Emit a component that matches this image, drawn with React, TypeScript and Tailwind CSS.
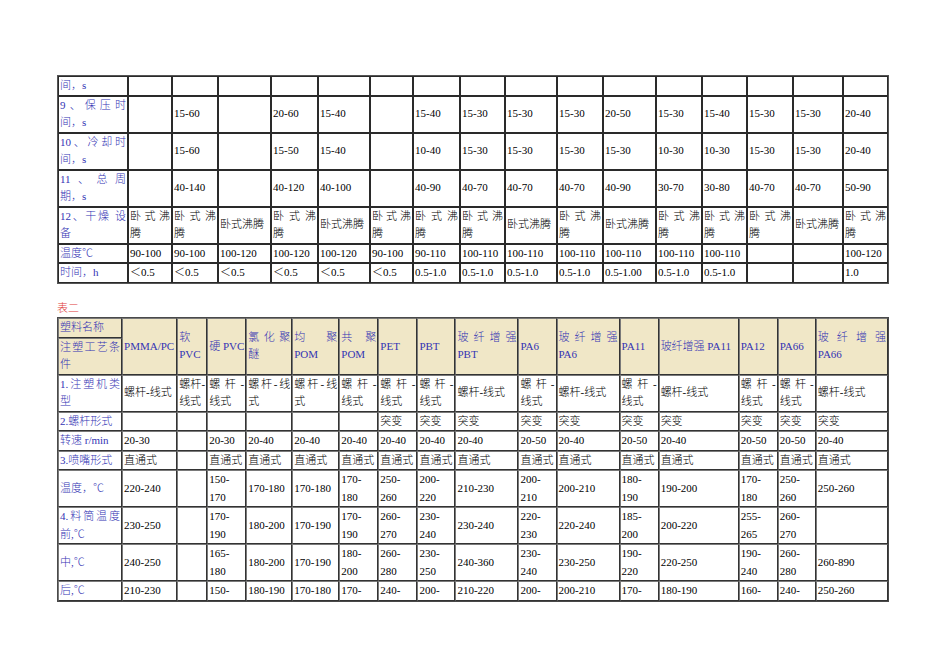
import React from "react";

const FONT = "font-['Liberation_Serif','Noto_Sans_CJK_SC',serif]";

const W1 = [
  "w-[70px]", "w-[44px]", "w-[46px]", "w-[53px]", "w-[47px]", "w-[52px]", "w-[43px]", "w-[47px]", "w-[45px]",
  "w-[52px]", "w-[46px]", "w-[53px]", "w-[46px]", "w-[45px]", "w-[46px]", "w-[50px]", "w-[45px]",
];

const W2 = [
  "w-[64px]", "w-[55px]", "w-[30px]", "w-[39px]", "w-[46px]", "w-[47px]", "w-[39px]", "w-[39px]", "w-[38px]",
  "w-[63px]", "w-[38px]", "w-[63px]", "w-[39px]", "w-[80px]", "w-[39px]", "w-[38px]", "w-[72px]",
];

type Row = { label: string; cells: string[] };

const W = "卧式沸|腾";
const S = "卧式沸腾";

const table1: Row[] = [
  { label: "间，s", cells: Array(16).fill("") },
  { label: "9、保压时|间，s", cells: ["", "15-60", "", "20-60", "15-40", "", "15-40", "15-30", "15-30", "15-30", "20-50", "15-30", "15-40", "15-30", "15-30", "20-40"] },
  { label: "10、冷却时|间，s", cells: ["", "15-60", "", "15-50", "15-40", "", "10-40", "15-30", "15-30", "15-30", "15-30", "10-30", "10-30", "15-30", "15-30", "20-40"] },
  { label: "11、总周|期，s", cells: ["", "40-140", "", "40-120", "40-100", "", "40-90", "40-70", "40-70", "40-70", "40-90", "30-70", "30-80", "40-70", "40-70", "50-90"] },
  { label: "12、干燥 设|备", cells: [W, W, S, W, S, W, W, W, S, W, S, W, W, W, S, W] },
  { label: "温度℃", cells: ["90-100", "90-100", "100-120", "100-120", "100-120", "90-100", "90-110", "100-110", "100-110", "100-110", "100-110", "100-110", "100-110", "", "", "100-120"] },
  { label: "时间，h", cells: ["＜0.5", "＜0.5", "＜0.5", "＜0.5", "＜0.5", "＜0.5", "0.5-1.0", "0.5-1.0", "0.5-1.0", "0.5-1.0", "0.5-1.00", "0.5-1.0", "0.5-1.0", "", "", "1.0"] },
];

const headers2 = [
  "PMMA/PC", "软|PVC", "硬 PVC", "氯化聚|醚", "均聚|POM", "共聚|POM", "PET", "PBT", "玻纤增强|PBT",
  "PA6", "玻纤增强|PA6", "PA11", "玻纤增强 PA11", "PA12", "PA66", "玻纤增强|PA66",
];

const LX = "螺杆-线式";
const L2 = "螺杆-|线式";
const ZT = "直通式";
const TB = "突变";

const table2: Row[] = [
  { label: "1.注塑机类|型", cells: [LX, "螺杆-|线式", L2, "螺杆-线|式", "螺杆-线|式", L2, L2, L2, LX, L2, LX, L2, LX, L2, L2, LX] },
  { label: "2.螺杆形式", cells: ["", "", "", "", "", "", TB, TB, TB, TB, TB, TB, TB, TB, TB, TB] },
  { label: "转速 r/min", cells: ["20-30", "", "20-30", "20-40", "20-40", "20-40", "20-40", "20-40", "20-40", "20-50", "20-40", "20-50", "20-40", "20-50", "20-50", "20-40"] },
  { label: "3.喷嘴形式", cells: [ZT, "", ZT, ZT, ZT, ZT, ZT, ZT, ZT, ZT, ZT, ZT, ZT, ZT, ZT, ZT] },
  { label: "温度，℃", cells: ["220-240", "", "150-|170", "170-180", "170-180", "170-|180", "250-|260", "200-|220", "210-230", "200-|210", "200-210", "180-|190", "190-200", "170-|180", "250-|260", "250-260"] },
  { label: "4.料筒温度|前,℃", cells: ["230-250", "", "170-|190", "180-200", "170-190", "170-|190", "260-|270", "230-|240", "230-240", "220-|230", "220-240", "185-|200", "200-220", "255-|265", "260-|270", ""] },
  { label: "中,℃", cells: ["240-250", "", "165-|180", "180-200", "170-190", "180-|200", "260-|280", "230-|250", "240-360", "230-|240", "230-250", "190-|220", "220-250", "190-|240", "260-|280", "260-890"] },
  { label: "后,℃", cells: ["210-230", "", "150-", "180-190", "170-180", "170-", "240-", "200-", "210-220", "200-", "200-210", "170-", "180-190", "160-", "240-", "250-260"] },
];

function Content({ v }: { v: string }) {
  if (!v) return null;
  const parts = v.split("|");
  if (parts.length === 1) return <span className="whitespace-nowrap">{v}</span>;
  return (
    <>
      <span className="block text-justify [text-align-last:justify]">{parts[0]}</span>
      <span className="block whitespace-nowrap">{parts[1]}</span>
    </>
  );
}

const C1 = "border border-[#2a2a2a] px-[1px] py-0 align-middle text-left leading-[17.5px]";
const C2 =
  "border border-t-[#7a7a7a] border-l-[#7a7a7a] border-r-[#333333] border-b-[#333333] px-[1px] py-0 align-middle text-left leading-[17.5px]";
const BLUE = "text-[#3434b4]";
const HEAD = "bg-[#f0e7c7]";

export default function App() {
  return (
    <div className={`${FONT} min-h-[672px] w-[950px] bg-white pl-[57px] pt-[75px] text-[11px] font-light text-black`}>
      <table className="w-[832px] table-fixed border-separate border-spacing-0 border border-[#555]">
        <colgroup>
          {W1.map((c, i) => (
            <col key={i} className={c} />
          ))}
        </colgroup>
        <tbody>
          {table1.map((r, ri) => (
            <tr key={ri}>
              <td className={`${C1} ${BLUE}`}>
                <Content v={r.label} />
              </td>
              {r.cells.map((c, ci) => (
                <td key={ci} className={C1}>
                  <Content v={c} />
                </td>
              ))}
            </tr>
          ))}
        </tbody>
      </table>

      <p className="mt-[16px] leading-[17.5px] text-[#e03c3c]">表二</p>

      <table className="w-[832px] table-fixed border-separate border-spacing-0 border border-[#4a4a4a]">
        <colgroup>
          {W2.map((c, i) => (
            <col key={i} className={c} />
          ))}
        </colgroup>
        <tbody>
          <tr>
            <td className={`${C2} ${BLUE} ${HEAD}`}>
              <span className="whitespace-nowrap">塑料名称</span>
            </td>
            {headers2.map((h, i) => (
              <td key={i} rowSpan={2} className={`${C2} ${BLUE} ${HEAD}`}>
                <Content v={h} />
              </td>
            ))}
          </tr>
          <tr>
            <td className={`${C2} ${BLUE} ${HEAD}`}>
              <Content v="注塑工艺条|件" />
            </td>
          </tr>
          {table2.map((r, ri) => (
            <tr key={ri}>
              <td className={`${C2} ${BLUE}`}>
                <Content v={r.label} />
              </td>
              {r.cells.map((c, ci) => (
                <td key={ci} className={C2}>
                  <Content v={c} />
                </td>
              ))}
            </tr>
          ))}
        </tbody>
      </table>
    </div>
  );
}
